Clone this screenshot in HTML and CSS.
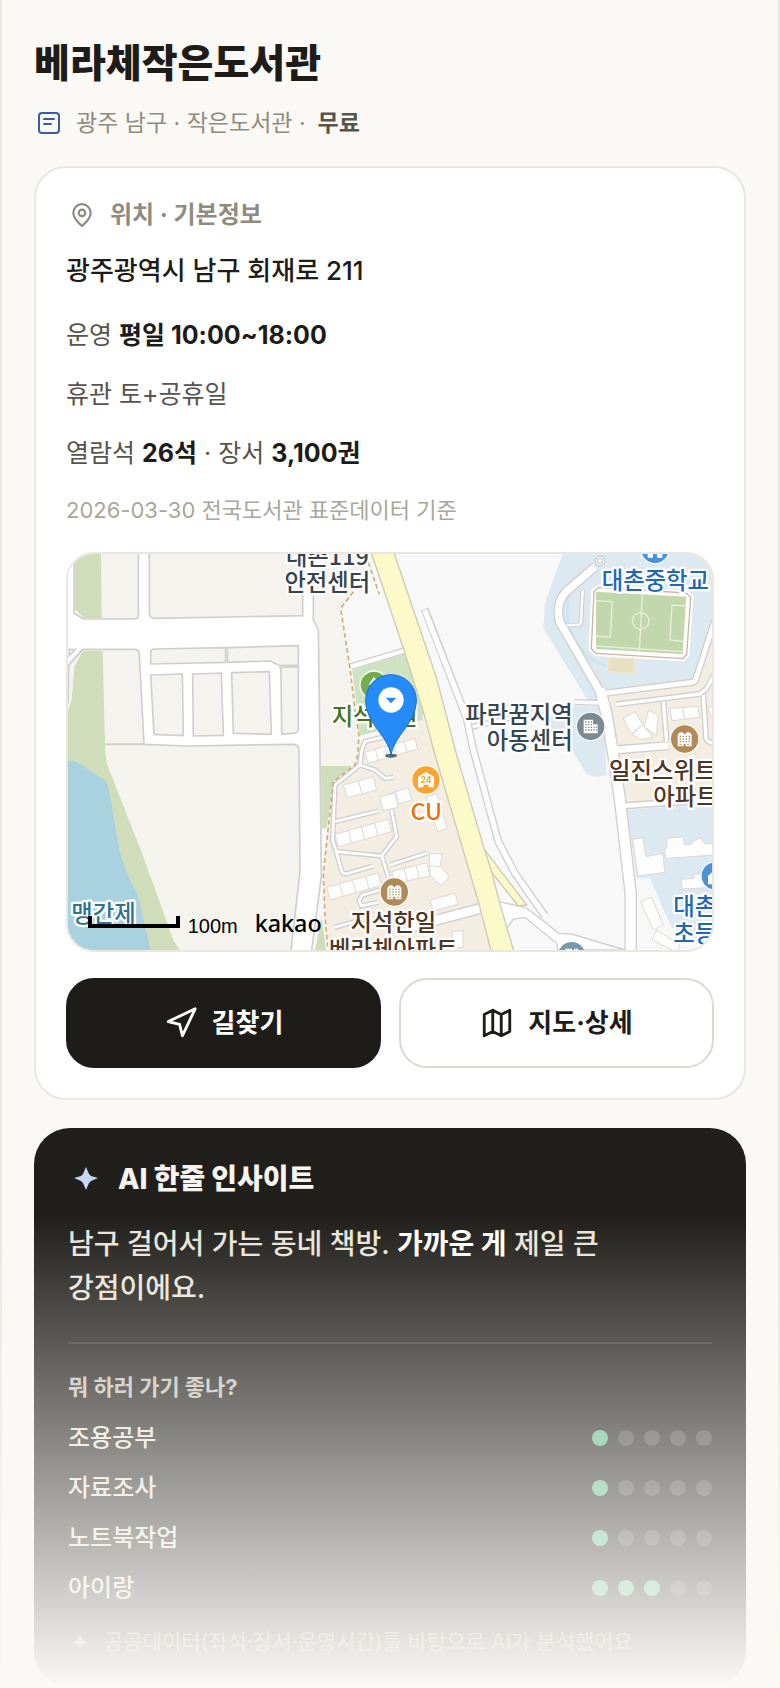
FILE: index.html
```html
<!DOCTYPE html>
<html lang="ko">
<head>
  <meta charset="UTF-8" />
  <meta name="viewport" content="width=device-width, initial-scale=1.0" />
  <title>베라체작은도서관</title>
  <link rel="stylesheet" href="styles.css">
</head>
<body>
  <main class="app">
    <!-- Library name -->
    <header class="library-header">
      <h1>베라체작은도서관</h1>
      <p class="meta">
        <svg class="meta-icon" viewBox="0 0 30 30" aria-hidden="true">
          <rect x="5" y="5" width="20" height="20" rx="3" />
          <path d="M10 11h10M10 16h7" />
        </svg>
        <span>광주 남구 · 작은도서관 ·</span>
        <strong>무료</strong>
      </p>
    </header>

    <!-- Location card -->
    <section class="card">
      <h2 class="card-label">
        <svg class="pin-icon" viewBox="0 0 24 24" aria-hidden="true">
          <path d="M20 10c0 6-8 12-8 12s-8-6-8-12a8 8 0 0 1 16 0z" />
          <circle cx="12" cy="10" r="3" />
        </svg>
        위치 · 기본정보
      </h2>
      <p class="address">광주광역시 남구 회재로 211</p>
      <p class="info">운영 <strong>평일 10:00~18:00</strong></p>
      <p class="info">휴관 토+공휴일</p>
      <p class="info">열람석 <strong>26석</strong> · 장서 <strong>3,100권</strong></p>
      <p class="source">2026-03-30 전국도서관 표준데이터 기준</p>

      <div class="map">
        <svg viewBox="0 0 1932 1188" preserveAspectRatio="xMidYMid slice" role="img" aria-label="베라체작은도서관 지도">
          <defs>
            <g id="apartment">
              <circle r="44" fill="#fff" />
              <circle r="41" fill="#b08a57" />
              <path d="M-21 22V-12L-17-18-10-21-4-18 0-13 4-18 10-21 17-18 21-12V22H3V14H-3V22Z" fill="#fff" />
              <path d="M-15-8H18M-15 0H18M-15 8H18M-15 16H-5M8 16H18" stroke="#b08a57" stroke-width="4" stroke-dasharray="4 5" />
            </g>
            <g id="school">
              <circle r="44" fill="#fff" />
              <circle r="41" fill="#4a92d3" />
              <path d="M-22 25V0L0-20 22 0V25H6V13H-6V25Z" fill="#fff" />
            </g>
          </defs>

          <!-- fields and water -->
          <rect width="1932" height="1188" fill="#f8f8f8" />
          <path d="M0 0H736V198L751 228 756 603 760 968 731 1188H0Z" fill="#fff" />
          <path d="M736 0V198L751 228 756 603 759 640H861L873 543 818 163 880 90 901 0Z" fill="#f4f3ee" />
          <path d="M736 118V198L751 228 756 603 760 968 731 1188" class="edge" />
          <g class="parcel">
            <path d="M18-5V178L46 195H200Q211 195 211 182V-5Z" />
            <path d="M244-5V178Q246 193 262 193L704 185V-5Z" />
            <path d="M44 286H201Q213 288 214 300L228 571H111L60 571 2 333Z" />
            <path d="M80 571H228L361 576 676 571Q692 571 693 590L696 953 669 1188 660 1200H80Z" />
            <path d="M248 330V295Q249 285 258 285L473 281V325Z" />
            <path d="M478 281 691 275V333L636 335 606 321 478 325Z" />
            <path d="M636 340 691 338V525Q690 538 676 538L641 540 639 350Z" />
            <path d="M248 363 343 360 346 545 258 541Z" />
            <path d="M374 360 460 357 466 544 376 546Z" />
            <path d="M491 356 604 353 610 541 496 538Z" />
            <path d="M4 286H22L4 305Z" />
          </g>
          <path d="M20 0V165L48 192H101L99 0Z" fill="#cfddba" />
          <path d="M46 290H104L111 571V588L116 628 226 908 316 1158 334 1188H0V470L10 440 20 335Z" fill="#cfddba" />
          <path d="M0 338 18 333 10 440 0 465Z" fill="#f4f3ee" />
          <path d="M44 286 2 333 0 450" class="edge" />
          <path d="M0 621H15Q24 621 34 629L108 677Q118 684 121 698L156 898 181 968 211 1028 248 1188H0Z" fill="#a8d2e0" />
          <path d="M759 636H854L796 683 776 823H761Z" fill="#cfddba" />
          <path d="M761 1088 774 1188H741Z" fill="#cfddba" />

          <!-- apartment blocks -->
          <path d="M876 560 1000 520 1066 490 1101 603 1234 1053 1268 1188H779L766 958 781 818 796 683 861 633Z" fill="#f4ede1" />
          <path d="M853 348 1011 300 1066 470 1062 498 875 545Z" fill="#cfe2c1" />
          <g class="road">
            <path d="M848 338 966 303 1015 288" stroke-width="21" class="casing" />
            <path d="M966 545 891 562 881 590 876 633 801 693 794 858 821 950Q825 961 836 959L916 936" class="casing" />
            <path d="M876 633 921 648 951 673 976 670M801 803 931 771M806 893 941 906 961 968M941 906 986 848 971 768M966 933 1076 898M936 1008 882 1024 873 1040 880 1056 930 1045M800 1120 880 1098" class="casing" />
            <path d="M1020 1122 1106 1098 1250 1060" stroke-width="34" class="casing" />
            <path d="M848 338 966 303 1015 288" stroke-width="13" />
            <path d="M966 545 891 562 881 590 876 633 801 693 794 858 821 950Q825 961 836 959L916 936" />
            <path d="M876 633 921 648 951 673 976 670M801 803 931 771M806 893 941 906 961 968M941 906 986 848 971 768M966 933 1076 898M936 1008 882 1024 873 1040 880 1056 930 1045M800 1120 880 1098" />
            <path d="M1020 1122 1106 1098 1250 1060" stroke-width="26" />
          </g>
          <g class="building">
            <path d="M826 693 916 668 926 708 838 731ZM871 681 882 719" />
            <path d="M801 841 961 795 970 833 811 878ZM841 830 851 867M880 818 890 856M920 807 930 845" />
            <path d="M776 1000 931 956 941 994 786 1038ZM815 989 825 1027M854 978 864 1016M893 967 903 1005" />
            <path d="M971 953 1076 926 1086 966 981 988ZM1008 943 1018 980M1044 934 1054 972" />
            <path d="M1084 898 1121 900 1118 938 1144 968 1119 995 1086 963ZM1086 935 1118 938" />
            <path d="M1086 1038 1161 1018 1171 1051 1096 1071Z" />
            <path d="M966 718 1021 701 1031 738 966 758ZM983 713 993 750" />
            <path d="M946 580 1041 553 1049 585 956 612ZM976 572 986 604M1008 563 1017 595" />
            <path d="M1074 728 1106 720 1138 823 1109 833Z" />
            <path d="M891 595 950 577 960 610 900 628ZM922 586 931 619" />
            <path d="M934 728 980 718 990 760 945 770Z" />
            <path d="M1152 1133 1184 1130 1186 1178 1155 1185Z" />
          </g>

          <!-- school grounds -->
          <path d="M1484 0 1430 150 1426 223 1560 440 1610 440 1876 388 1932 200V0Z" fill="#dce9f1" />
          <path d="M1446 490 1520 455H1606L1616 664 1590 668Q1560 668 1553 655L1510 585 1450 560Z" fill="#dce9f1" />
          <path d="M1500 210Q1485 95 1560 50M1506 225Q1540 320 1640 345" fill="none" stroke="#d0e4ef" stroke-width="8" />
          <path d="M1606 425 1876 388 1932 200V740L1671 745 1650 690Z" fill="#f4ede1" />
          <path d="M1676 768 1932 748V1188L1810 1120 1746 973H1706Z" fill="#dce9f1" />

          <!-- roads on the east side -->
          <g class="road">
            <path d="M1206 520 1440 466M1520 444 1600 447" stroke-width="18" class="casing" />
            <path d="M1496 213H1530Q1538 213 1539 203L1544 110" stroke-width="14" class="casing" />
            <path d="M1606 418 1872 385Q1881 383 1884 374L1940 200" stroke-width="22" class="casing" />
            <path d="M1646 451 1895 420 1915 405 1940 360M1786 443 1796 563M1906 423 1914 553Q1915 562 1940 570" stroke-width="18" class="casing" />
            <path d="M1640 588 1800 575" stroke-width="28" class="casing" />
            <path d="M1660 756 1940 736" stroke-width="22" class="casing" />
            <path d="M1581 38 1496 112Q1460 150 1476 205L1596 413" stroke-width="30" class="casing" />
            <path d="M1596 405 1614 473 1636 603 1656 738 1688 1018V1200" stroke-width="38" class="casing" />
            <path d="M1206 520 1440 466M1520 444 1600 447" stroke-width="10" />
            <path d="M1496 213H1530Q1538 213 1539 203L1544 110" stroke-width="7" />
            <path d="M1606 418 1872 385Q1881 383 1884 374L1940 200" stroke-width="14" />
            <path d="M1646 451 1895 420 1915 405 1940 360M1786 443 1796 563M1906 423 1914 553Q1915 562 1940 570" stroke-width="10" />
            <path d="M1640 588 1800 575" stroke-width="20" />
            <path d="M1660 756 1940 736" stroke-width="14" />
            <path d="M1581 38 1496 112Q1460 150 1476 205L1596 413" stroke-width="22" />
            <path d="M1596 405 1614 473 1636 603 1656 738 1688 1018V1200" stroke-width="30" />
          </g>
          <circle cx="1596" cy="21" r="15" fill="#fff" stroke="#cfcfcf" stroke-width="4" />
          <circle cx="1596" cy="21" r="8" fill="#f8f8f8" stroke="#cfcfcf" stroke-width="4" />

          <!-- sports field -->
          <path d="M1592 100 1854 117 1868 130 1856 302 1844 314 1584 298 1570 284 1578 112Z" fill="#fff" stroke="#fff" stroke-width="16" />
          <path d="M1592 100 1854 117 1868 130 1856 302 1844 314 1584 298 1570 284 1578 112Z" fill="none" stroke="#cdb3a4" stroke-width="4" />
          <path d="M1584 113 1855 128 1844 301 1584 285Z" fill="#c2d8ac" />
          <g fill="none" stroke="#e6efdc" stroke-width="4">
            <path d="M1723 120 1714 290M1584 140 1633 143 1627 250 1584 246M1853 156 1812 153 1806 258 1847 263M1584 276 1846 293" />
            <circle cx="1718" cy="201" r="25" />
          </g>
          <path d="M1621 311 1699 315V358L1618 353Z" fill="#e9dfc1" stroke="#efe8d3" stroke-width="4" />

          <g class="building">
            <path d="M1666 493 1701 473 1724 512 1690 540Z" />
            <path d="M1742 468 1770 485 1766 545 1728 518Z" />
            <path d="M1692 542 1724 512 1755 550 1718 556Z" />
            <path d="M1806 463 1890 457 1895 490 1812 500ZM1844 460 1850 496" />
            <path d="M1920 460 1940 455V490L1925 480Z" />
            <path d="M1694 856 1724 851 1734 908 1784 898 1791 955 1709 966Z" />
            <path d="M1796 853 1846 848 1849 873 1870 870 1878 860 1896 853 1911 870 1940 868V903L1793 913 1789 885 1797 881Z" />
            <path d="M1839 976 1878 973V960H1940V1000L1843 1005Z" />
            <path d="M1718 1043 1751 1030 1786 1113 1756 1128Z" />
            <path d="M1766 1128 1836 1173 1826 1195 1752 1158Z" />
          </g>

          <!-- main road -->
          <g class="road">
            <path d="M1070 165 1196 493 1216 588 1291 863 1341 958 1430 1085" stroke-width="24" class="casing" />
            <path d="M1070 168 1196 493 1216 588 1291 863 1341 958 1430 1085" stroke-width="16" />
          </g>
          <path d="M1290 1043 1371 1060 1436 1108 1471 1138 1511 1140 1671 1188H1470L1466 1168 1371 1090 1336 1095 1312 1130Z" fill="#fff" stroke="#cfcfcf" stroke-width="4" />
          <path d="M1249 886 1376 1053 1351 1056 1269 953Z" fill="#fdfac9" stroke="#cdc9b6" stroke-width="4" />
          <path d="M908-9 966 163 1006 283 1066 473 1101 603 1234 1053 1270 1194H1338L1294 1043 1271 953 1249 886 1166 603 1106 373 1038 173 976-9Z" fill="#fdfac9" stroke="#cdc9b6" stroke-width="4" />

          <path d="M901 25 934 121M856 113 818 163 846 343 863 483 873 543 869 603 861 633 796 683 781 818 766 958 771 1088 779 1178" fill="none" stroke="#cfae75" stroke-width="5" stroke-dasharray="14 9" />

          <!-- places -->
          <circle cx="918" cy="393" r="44" fill="#fff" />
          <circle cx="918" cy="393" r="40" fill="#76ad4c" />
          <path d="M918 368 902 392H934Z" fill="#fff" />
          <use href="#school" x="1761" y="-14" />
          <use href="#school" x="1942" y="966" />
          <use href="#apartment" x="1850" y="555" />
          <use href="#apartment" x="979" y="1014" />
          <circle cx="1568" cy="517" r="44" fill="#fff" />
          <circle cx="1568" cy="517" r="41" fill="#7b8a91" />
          <path d="M1547 497H1575V511H1589V538H1547Z" fill="#fff" />
          <path d="M1552 504H1573M1552 512H1573M1552 520H1587M1552 528H1587" stroke="#7b8a91" stroke-width="4" stroke-dasharray="4 4" />
          <circle cx="1511" cy="1205" r="41" fill="#7799aa" />
          <path d="M1492 1184H1512V1200H1492ZM1518 1184H1530V1200H1518Z" fill="#fff" />
          <circle cx="1074" cy="678" r="44" fill="#fff" />
          <circle cx="1074" cy="678" r="41" fill="#faa530" />
          <path d="M1050 700V668L1074 654 1098 668V700H1082V692H1066V700Z" fill="#fff" />
          <text class="shop-number" x="1074" y="688" text-anchor="middle">24</text>

          <g class="label">
            <text x="778" y="34" text-anchor="middle" fill="#36444d">대촌119</text>
            <text x="778" y="110" text-anchor="middle" fill="#36444d">안전센터</text>
            <text x="791" y="512" fill="#43731f">지석공원</text>
            <text x="1762" y="104" text-anchor="middle" fill="#2068b6">대촌중학교</text>
            <text x="1514" y="507" text-anchor="end" fill="#36444d">파란꿈지역</text>
            <text x="1514" y="585" text-anchor="end" fill="#36444d">아동센터</text>
            <text x="1623" y="675" fill="#4f3523">일진스위트</text>
            <text x="1756" y="753" fill="#4f3523">아파트</text>
            <text x="1075" y="797" text-anchor="middle" fill="#e8740c">CU</text>
            <text x="976" y="1131" text-anchor="middle" fill="#4f3523">지석한일</text>
            <text x="976" y="1213" text-anchor="middle" fill="#4f3523">베라체아파트</text>
            <text x="1816" y="1082" fill="#2068b6">대촌</text>
            <text x="1816" y="1164" fill="#2068b6">초등</text>
            <text x="10" y="1105" fill="#2f7391">맹간제</text>
          </g>

          <!-- marker -->
          <ellipse cx="969" cy="605" rx="18" ry="6" fill="#5b6470" />
          <path d="M969 605C962 545 893 510 893 438A76 76 0 0 1 1045 438C1045 510 976 545 969 605Z" fill="#258bf9" stroke="#1b6fd0" stroke-width="3" />
          <circle cx="969" cy="438" r="38" fill="#fff" />
          <path d="M953 431H985L969 448Z" fill="#258bf9" />

          <!-- scale -->
          <path d="M66 1086V1116H330V1086" fill="none" stroke="#000" stroke-width="12" />
          <text class="scale-text" x="359" y="1138">100m</text>
          <text class="map-brand" x="560" y="1133">kakao</text>
        </svg>
      </div>

      <div class="actions">
        <button type="button" class="btn btn-dark">
          <svg viewBox="0 0 24 24" aria-hidden="true"><path d="M3 11 22 2 13 21 11 13Z" /></svg>
          길찾기
        </button>
        <button type="button" class="btn btn-light">
          <svg viewBox="0 0 24 24" aria-hidden="true"><path d="M3 6 9 3 15 6 21 3V18L15 21 9 18 3 21ZM9 3V18M15 6V21" /></svg>
          지도·상세
        </button>
      </div>
    </section>

    <!-- AI insight card -->
    <section class="insight">
      <h2>
        <svg class="spark" viewBox="0 0 36 36" aria-hidden="true"><path d="M18 6L21 13Q22 14 23 15L30 17 23 20Q22 21 21 22L18 29 15 22Q14 21 13 20L6 17 13 15Q14 14 15 13Z" /></svg>
        AI 한줄 인사이트
      </h2>
      <p class="summary">남구 걸어서 가는 동네 책방. <strong>가까운 게</strong> 제일 큰 강점이에요.</p>
      <div class="ratings">
        <h3>뭐 하러 가기 좋나?</h3>
        <ul>
          <li>조용공부 <span class="dots"><i class="on"></i><i></i><i></i><i></i><i></i></span></li>
          <li>자료조사 <span class="dots"><i class="on"></i><i></i><i></i><i></i><i></i></span></li>
          <li>노트북작업 <span class="dots"><i class="on"></i><i></i><i></i><i></i><i></i></span></li>
          <li>아이랑 <span class="dots"><i class="on"></i><i class="on"></i><i class="on"></i><i></i><i></i></span></li>
        </ul>
      </div>
      <p class="footnote">
        <svg class="spark-small" viewBox="0 0 24 24" aria-hidden="true"><path d="M12 4Q13 11 20 12Q13 13 12 20Q11 13 4 12Q11 11 12 4Z" /></svg>
        공공데이터(좌석·장서·운영시간)를 바탕으로 AI가 분석했어요
      </p>
    </section>
  </main>
</body>
</html>
```
FILE: styles.css
```css
* {
  box-sizing: border-box;
}

body {
  margin: 0;
  background: #faf9f5;
  color: #1d1c18;
  font-family: Inter, "Noto Sans CJK KR", sans-serif;
}

h1, h2, h3, p, ul {
  margin: 0;
  padding: 0;
}

.app {
  position: relative;
  padding: 39px 32px 0;
  border-left: 2px solid #e9e7e0;
  border-right: 2px solid #e9e7e0;
}

/* fade out towards the bottom */
.app::after {
  content: "";
  position: absolute;
  left: -2px;
  right: -2px;
  bottom: 0;
  height: 472px;
  background: linear-gradient(rgba(250, 249, 245, 0), #faf9f5);
  pointer-events: none;
}

.library-header h1 {
  font-size: 39px;
  line-height: 48px;
  font-weight: 800;
}

.meta {
  display: flex;
  align-items: center;
  gap: 12px;
  margin: 19px 0 26px;
  font-size: 23px;
  line-height: 34px;
  color: #8f8b80;
}

.meta strong {
  font-weight: 600;
  color: #57544c;
}

.meta-icon {
  width: 30px;
  height: 30px;
  fill: none;
  stroke: #3d5aa9;
  stroke-width: 2;
  stroke-linecap: round;
}

/* Location card */
.card {
  padding: 30px;
  background: #fff;
  border: 2px solid #e9e7e0;
  border-radius: 32px;
}

.card-label {
  display: flex;
  align-items: center;
  gap: 15px;
  margin-bottom: 21px;
  font-size: 24px;
  line-height: 34px;
  font-weight: 700;
  color: #8f8b80;
}

.pin-icon {
  width: 26px;
  height: 26px;
  margin-left: 3px;
  fill: none;
  stroke: #8f8b80;
  stroke-width: 2;
}

.address {
  margin-bottom: 28px;
  font-size: 26px;
  line-height: 36px;
  font-weight: 500;
}

.info {
  margin-bottom: 23px;
  font-size: 25px;
  line-height: 36px;
  color: #57544c;
}

.info strong {
  font-weight: 700;
  color: #1d1c18;
}

.source {
  font-size: 22px;
  line-height: 32px;
  color: #aaa69b;
}

.map {
  margin: 26px 0;
  border: 2px solid #e9e7e0;
  border-radius: 28px;
  overflow: hidden;
}

.map svg {
  display: block;
  width: 100%;
  height: 396px;
}

.edge {
  fill: none;
  stroke: #cfcfcf;
  stroke-width: 5;
}

.parcel {
  fill: #f4f3ee;
  stroke: #cfcfcf;
  stroke-width: 5;
}

.building {
  fill: #fdfdfc;
  stroke: #dcdad6;
  stroke-width: 3;
}

.road {
  fill: none;
  stroke: #fff;
  stroke-width: 8;
  stroke-linejoin: round;
}

.road .casing {
  stroke: #cfcfcf;
}

.road .casing:not([stroke-width]) {
  stroke-width: 16;
}

.label {
  font-family: "Noto Sans CJK KR", sans-serif;
  font-size: 70px;
  font-weight: 500;
  stroke: #fff;
  stroke-width: 14;
  stroke-linejoin: round;
  paint-order: stroke;
}

.shop-number {
  font-size: 26px;
  font-weight: 700;
  fill: #faa530;
}

.scale-text {
  font-family: "Liberation Sans", sans-serif;
  font-size: 60px;
}

.map-brand {
  font-family: "Noto Sans", sans-serif;
  font-size: 70px;
  font-weight: 500;
}

.actions {
  display: grid;
  grid-template-columns: 1fr 1fr;
  gap: 18px;
}

.btn {
  display: flex;
  align-items: center;
  justify-content: center;
  gap: 14px;
  height: 90px;
  border: 2px solid #dcd9d0;
  border-radius: 28px;
  background: #fff;
  color: #1d1c18;
  font-family: inherit;
  font-size: 26px;
  line-height: 34px;
  font-weight: 700;
  cursor: pointer;
}

.btn-dark {
  background: #1d1c18;
  border-color: #1d1c18;
  color: #fff;
}

.btn svg {
  width: 34px;
  height: 34px;
  fill: none;
  stroke: currentColor;
  stroke-width: 2;
  stroke-linecap: round;
  stroke-linejoin: round;
}

/* AI insight card */
.insight {
  margin-top: 28px;
  padding: 32px 34px 30px;
  background: #201f1b;
  border-radius: 36px;
  color: #e8e4da;
}

.insight h2 {
  display: flex;
  align-items: center;
  gap: 14px;
  margin-bottom: 24px;
  font-size: 28px;
  line-height: 38px;
  font-weight: 800;
  color: #f7f5ef;
}

.spark {
  width: 36px;
  height: 36px;
  fill: #c9d6f5;
}

.summary {
  font-size: 28px;
  line-height: 44px;
  font-weight: 500;
  word-break: keep-all;
}

.summary strong {
  font-weight: 700;
  color: #fff;
}

.ratings {
  margin-top: 32px;
  padding-top: 27px;
  border-top: 2px solid rgba(255, 255, 255, 0.1);
}

.ratings h3 {
  margin-bottom: 10px;
  font-size: 22px;
  line-height: 32px;
  font-weight: 700;
  color: #c5c0b4;
}

.ratings ul {
  list-style: none;
}

.ratings li {
  display: flex;
  align-items: center;
  justify-content: space-between;
  font-size: 24px;
  line-height: 50px;
  font-weight: 500;
}

.dots {
  display: flex;
  gap: 10px;
}

.dots i {
  width: 16px;
  height: 16px;
  border-radius: 50%;
  background: rgba(255, 255, 255, 0.16);
}

.dots .on {
  background: #5dba90;
}

.footnote {
  display: flex;
  align-items: center;
  gap: 12px;
  margin-top: 14px;
  font-size: 21px;
  line-height: 30px;
  color: #918e84;
}

.spark-small {
  width: 24px;
  height: 24px;
  fill: #b0ada3;
}
```
